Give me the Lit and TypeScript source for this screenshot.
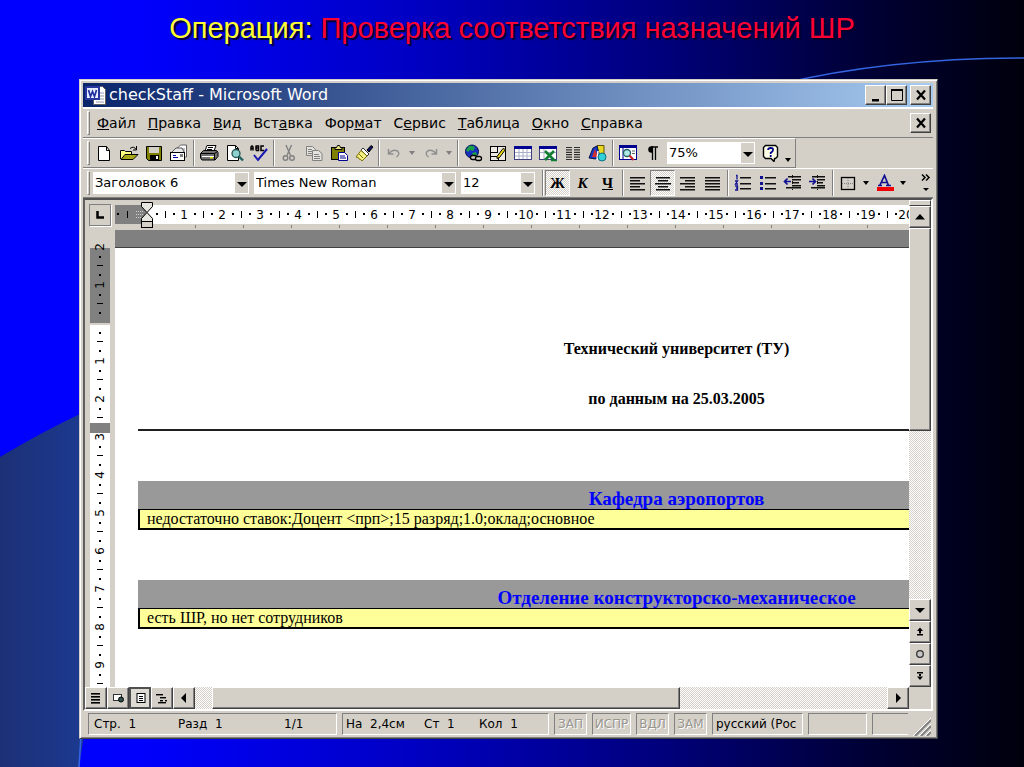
import { LitElement, html, css, svg, nothing } from "lit";
import { customElement, property } from "lit/decorators.js";
import { classMap } from "lit/directives/class-map.js";

const range = (a: number, b: number) => Array.from({ length: b - a + 1 }, (_, i) => a + i);

const lines = (rows: number[][], color = "#000", h = 1) =>
  rows.map(([x, y, w]) => svg`<rect x=${x} y=${y} width=${w} height=${h} fill=${color} />`);

const icons: Record<string, unknown> = {
  new: svg`<path d="M4.5 2.500h8l3 4v10h-11z" fill="#fff" stroke="#000"/><path d="M12.500 2.500v4h3" fill="none" stroke="#000"/>`,
  open: svg`<path d="M1.500 15V6.500h4l1 1h6v3" fill="#ffff80" stroke="#000"/><path d="M2 15.500l4-5h13l-5 5z" fill="#a8a818" stroke="#000"/><path d="M11 4.500q4-3 6 1M17.500 2v4h-3.500" fill="none" stroke="#000"/>`,
  save: svg`<path d="M2.500 2.500h15v14h-13l-2-2z" fill="#808000" stroke="#000"/><rect x="5" y="3" width="10" height="6" fill="#d4d0c8"/><rect x="6" y="11" width="9" height="5.500" fill="#000"/><rect x="12" y="12" width="2" height="3" fill="#fff"/>`,
  mail: svg`<path d="M8.500 9V4l3-3h6v12h-4" fill="#fff" stroke="#606060"/><path d="M11 5h5M11 7h5" stroke="#808080"/><path d="M3 8l4-4h6l2 4" fill="#e8e8e8" stroke="#555"/><rect x="1.500" y="8.500" width="14" height="8" fill="#fff" stroke="#000"/><path d="M4 13.500h5M4 11.500h3" stroke="#0000a0"/><rect x="11" y="10" width="3" height="3" fill="#808080"/>`,
  print: svg`<path d="M6 7l2-5.500h9L15 7" fill="#fff" stroke="#000"/><path d="M9 3.500h5M8 5.500h5" stroke="#000"/><path d="M1.500 9.500l3-3h13l1.500 2v4l-3 3.500h-13l-1.500-2z" fill="#707070" stroke="#000"/><path d="M2 9.500h13.500l3-2M15.500 9.500V16" fill="none" stroke="#000"/><path d="M3 12.500h12" stroke="#fff"/><rect x="11" y="13" width="3" height="1.500" fill="#e0e000"/>`,
  preview: svg`<path d="M3.500 1.500h8l3 3v12h-11z" fill="#fff" stroke="#000"/><path d="M11.500 1.500v3h3" fill="none" stroke="#000"/><circle cx="12" cy="9.500" r="4" fill="#8fd0d0" stroke="#205050" stroke-width="1.300"/><path d="M15 12.500l4 4" stroke="#206060" stroke-width="2.400"/>`,
  spell: svg`<path d="M2 6.500V3q1-2 2 0v3.500M2 4.500h2M7 1.500v5M7 2h2.500v2H7h2.500v2.500H7M15 2h-3v4.500h3" fill="none" stroke="#000" stroke-width="1.500"/><path d="M5 11l4 5 9-11" fill="none" stroke="#1818b0" stroke-width="2"/>`,
  cut: svg`<path d="M7 1l4.500 10.500M12.500 1L8 11.500" stroke="#808080" stroke-width="1.400" fill="none"/><circle cx="6.500" cy="14" r="2.300" fill="none" stroke="#808080" stroke-width="1.400"/><circle cx="13" cy="14" r="2.300" fill="none" stroke="#808080" stroke-width="1.400"/>`,
  copy: svg`<path d="M2.500 2.500h6l3 3v6h-9z" fill="#e4e2dc" stroke="#808080"/><path d="M4 5.500h4M4 7.500h5M4 9.500h4" stroke="#808080"/><path d="M8.500 6.500h6l3.500 3v7H8.500z" fill="#e4e2dc" stroke="#808080"/><path d="M10 10.500h5M10 12.500h6M10 14.500h6" stroke="#808080"/>`,
  paste: svg`<rect x="2.500" y="3.500" width="13" height="12" fill="#808000" stroke="#000"/><path d="M6 5.500V3.500h1.500l1-2h2l1 2H13v2z" fill="#e8e080" stroke="#000"/><path d="M9.500 8.500h6l3 3v5h-9z" fill="#fff" stroke="#000090"/><path d="M11 12h5M11 14h6" stroke="#000090"/>`,
  brush: svg`<path d="M13 6l4-4.500 2 1.500-4 5z" fill="#101060" stroke="#000"/><path d="M9 4l6 6-2 2-6-6z" fill="#fff" stroke="#303030"/><path d="M7 6.500l6 5.500-5 5q-1-2-3-2 0-2-3-2z" fill="#f4f080" stroke="#807000"/><path d="M5 10l4 4" stroke="#807000"/>`,
  undo: svg`<path d="M4.500 5v5h5M5 9.500q4-5 8.500-2.500 3 3-1 6" fill="none" stroke="#909090" stroke-width="1.500"/>`,
  redo: svg`<path d="M15.500 5v5h-5M15 9.500q-4-5-8.500-2.500-3 3 1 6" fill="none" stroke="#909090" stroke-width="1.500"/>`,
  globe: svg`<circle cx="9" cy="7.500" r="6.500" fill="#1830c0" stroke="#001050"/><path d="M6 2q5-1 6 2l-2 3-3-1-2 2-2-2zM9 9l4-1 1 3-3 2z" fill="#18a048"/><rect x="7.500" y="11.500" width="6" height="4" rx="2" fill="#d4d0c8" stroke="#000" stroke-width="1.300"/><rect x="12.500" y="12.500" width="6" height="4" rx="2" fill="#d4d0c8" stroke="#000" stroke-width="1.300"/>`,
  borders: svg`<rect x="2.500" y="2.500" width="15" height="14" fill="#ece9e2" stroke="#000"/><path d="M3 8.500h7M9.500 2v6M3 12.500h8M10.500 12v4" stroke="#000"/><path d="M9 12.500l6-8 2.500 1-6 8-2.500 1z" fill="#e8d820" stroke="#000"/>`,
  table: svg`<rect x="1.500" y="2.500" width="17" height="13" fill="#fff" stroke="#404080"/><rect x="1" y="2" width="18" height="3" fill="#000090"/><path d="M2 8.500h16M2 12h16M6 5v10M10 5v10M14 5v10" stroke="#a8b0c8"/>`,
  excel: svg`<rect x="1.500" y="2.500" width="17" height="13" fill="#fff" stroke="#404080"/><rect x="1" y="2" width="18" height="3" fill="#000090"/><path d="M2 8.500h16M6 5v10" stroke="#a8b0c8"/><path d="M7 7l9 9M16 7l-9 9" stroke="#108030" stroke-width="2.600"/><path d="M13 16.500h6" stroke="#108030" stroke-width="1.500"/>`,
  columns: svg`${range(0, 5).map((i) => svg`<path d=${`M3 ${3.5 + i * 2.4}h6M11 ${3.5 + i * 2.4}h6`} stroke="#303030" stroke-width="1.200"/>`)}`,
  draw: svg`<path d="M9 1.500h7v11H9z" fill="#e8d820" stroke="#605000"/><path d="M1 14L5 4l4-2 3 11-4 2z" fill="#1838c0" stroke="#001050"/><path d="M4 13L7 5l3 8z" fill="#d03030"/><path d="M10 7l-1 9" stroke="#fff" stroke-width="1.500"/><circle cx="14" cy="13" r="4" fill="#30d0d8" stroke="#107080"/>`,
  docmap: svg`<rect x="1.500" y="1.500" width="17" height="14" fill="#fff" stroke="#000090"/><rect x="1" y="1" width="18" height="3" fill="#000090"/><path d="M5 4v11" stroke="#000090"/><circle cx="9" cy="9" r="3.500" fill="#b0e8e8" stroke="#206060" stroke-width="1.300"/><path d="M11.500 11.500l4 4.500" stroke="#d02020" stroke-width="2"/><path d="M14 7h3M14 9.500h3" stroke="#606060"/>`,
  para: svg`<path d="M9.500 16V3.500M12.500 16V3.500M8 3h7" stroke="#000" stroke-width="1.300" fill="none"/><path d="M10 2.300H8.500a3 3 0 0 0 0 6.500H10z" fill="#000"/>`,
  help: svg`<path d="M5.500 1.500h10l2 2v9l-2 2h-1l-.5 3-3-3H5.500l-2-2v-9z" fill="#ffffe8" stroke="#000" stroke-width="1.400"/><path d="M8 6q0-2 2.700-2T13 6q0 1.500-2.300 2.800V10M10.700 11v2" fill="none" stroke="#000090" stroke-width="1.800"/>`,
  left: svg`${lines([[2, 3, 15], [2, 6, 10], [2, 9, 15], [2, 12, 10], [2, 15, 15]], "#111", 1.500)}`,
  center: svg`${lines([[3, 3, 14], [5, 6, 10], [2, 9, 16], [5, 12, 10], [3, 15, 14]], "#111", 1.500)}`,
  right: svg`${lines([[2, 3, 15], [7, 6, 10], [2, 9, 15], [7, 12, 10], [2, 15, 15]], "#111", 1.500)}`,
  justify: svg`${lines([[2, 3, 15], [2, 6, 15], [2, 9, 15], [2, 12, 15], [2, 15, 15]], "#111", 1.500)}`,
  numbered: svg`<path d="M3 1.500h1v4M2 7h2.500l-2 3h2.500M2 12h2.500v4H2M3 14h1.500" fill="none" stroke="#101090" stroke-width="1.300"/>${lines([[7, 3, 11], [7, 9, 11], [7, 14, 11]], "#111", 1.500)}`,
  bullets: svg`${lines([[2, 2, 3], [2, 8, 3], [2, 13, 3]], "#101090", 3)}${lines([[7, 3, 11], [7, 9, 11], [7, 14, 11]], "#111", 1.500)}`,
  outdent: svg`<path d="M2 7.500h6M4.500 4.500l-3 3 3 3" fill="none" stroke="#101090" stroke-width="1.700"/>${lines([[5, 2, 13], [9, 5, 9], [9, 8, 7], [9, 11, 9], [3, 13, 15]], "#111", 1.500)}<path d="M9.500 1v16" stroke="#111" stroke-dasharray="1 1"/>`,
  indent: svg`<path d="M1 7.500h6M4.500 4.500l3 3-3 3" fill="none" stroke="#101090" stroke-width="1.700"/>${lines([[4, 2, 13], [9, 5, 8], [9, 8, 6], [9, 11, 8], [3, 13, 14]], "#111", 1.500)}<path d="M9.500 1v16" stroke="#111" stroke-dasharray="1 1"/>`,
  frame: svg`<rect x="3.500" y="3.500" width="13" height="12" fill="none" stroke="#000" stroke-width="1.300"/><path d="M10 4v11M4 9.500h12" stroke="#808080" stroke-dasharray="1 1"/>`,
  color: svg`<path d="M3 11.500h4M11 11.500h5M5 11l4.500-9.500 4 10M6 8.500h6" fill="none" stroke="#101090" stroke-width="1.700"/><rect x="2" y="13" width="17" height="4" fill="#f00000"/>`,
  word: svg`<path d="M8.500 1.500h9l3 3v15h-12z" fill="#fff" stroke="#606060"/><path d="M13 8h6M13 11h6M13 14h6M11 17h8" stroke="#9098b0"/><rect x="1" y="2" width="13" height="12" fill="#e8ecff" stroke="#2838a0" stroke-width="2"/><path d="M3.500 5l2 6.500 2-5 2 5 2-6.500" fill="none" stroke="#2030a0" stroke-width="1.700"/>`,
  min: svg`<rect x="6" y="13" width="7" height="2.500" fill="#000"/>`,
  max: svg`<path d="M4.500 3.500h11v11h-11z" fill="none" stroke="#000"/><rect x="4" y="3" width="12" height="2" fill="#000"/>`,
  close: svg`<path d="M6 4.500l8 9M14 4.500l-8 9" stroke="#000" stroke-width="2.200"/>`,
  up: svg`<path d="M10 6l5 5.500H5z" fill="#000"/>`,
  down: svg`<path d="M10 12l5-5H5z" fill="#000"/>`,
  prev: svg`<path d="M8 4v10l5-5z" transform="rotate(180 10 9)" fill="#000"/>`,
  next: svg`<path d="M8 4v10l5-5z" fill="#000"/>`,
  pageUp: svg`<path d="M10 4.500l3 3.500H7zM9 8h2v2.500H9z" fill="#000"/><rect x="7" y="11" width="6" height="1.500" fill="#000"/>`,
  pageDown: svg`<path d="M10 13l3-3.500H7zM9 7h2v3H9z" fill="#000"/><rect x="7" y="5" width="6" height="1.500" fill="#000"/>`,
  browse: svg`<circle cx="10" cy="9" r="3.300" fill="#c8c8c8" stroke="#303030" stroke-width="1.300"/>`,
  viewNormal: svg`${lines([[5, 4, 9], [5, 7, 9], [5, 10, 9], [5, 13, 9]], "#000", 1.600)}`,
  viewWeb: svg`<rect x="5.500" y="5.500" width="8" height="6" fill="#fff" stroke="#303030"/><circle cx="13" cy="10.500" r="2.500" fill="#305050" stroke="#000"/>`,
  viewPage: svg`<rect x="6" y="4.500" width="8" height="9" fill="#fff" stroke="#000"/><path d="M8 7.500h4M8 9.500h4M8 11.500h4" stroke="#000"/>`,
  viewOutline: svg`${lines([[4, 5, 7], [8, 8, 6], [8, 11, 3], [13, 11, 2], [6, 13, 8]], "#000", 1.400)}`,
};

@customElement("w-icon")
export class WIcon extends LitElement {
  @property() name = "";
  static styles = css`
    :host { display: block; }
    svg { display: block; }
  `;
  render() {
    const big = this.name === "word";
    return html`<svg width=${big ? 22 : 20} height=${big ? 21 : 18} viewBox=${big ? "0 0 22 21" : "0 0 20 18"} aria-hidden="true">${icons[this.name]}</svg>`;
  }
}

@customElement("w-ruler")
export class WRuler extends LitElement {
  @property({ type: Boolean }) vertical = false;
  static styles = css`
    :host { display: block; overflow: hidden; }
    svg { display: block; }
    text { font: 12px "DejaVu Sans", sans-serif; text-anchor: middle; fill: #000; }
  `;
  render() {
    return this.vertical ? this.renderVertical() : this.renderHorizontal();
  }
  private renderHorizontal() {
    const zero = 31;
    const step = 38;
    return html`<svg width="2000" height="30" aria-hidden="true">
      <rect x="0" y="5" width="2000" height="19" fill="#fff" />
      <rect x="0" y="5" width=${zero} height="19" fill="#808080" />
      <path d="M21 11.500h8M21 14.500h8M21 17.500h8" stroke="#d0d0d0" stroke-dasharray="1 1" />
      <rect x="2" y="13" width="2" height="2" /><rect x="12" y="11" width="1" height="7" />
      ${range(0, 20).map((n) => svg`
        ${n ? svg`<text x=${zero + n * step} y="19">${n}</text>` : nothing}
        <rect x=${zero + n * step + 10} y="13" width="2" height="2" />
        <rect x=${zero + n * step + 19} y="11" width="1" height="7" />
        <rect x=${zero + n * step + 27} y="13" width="2" height="2" />
        <rect x=${80 + n * 48} y="25" width="1" height="3" fill="#808080" />`)}
      <path d="M26.500 2.500h11v4l-5.500 6-5.500-6zM32 12.500l5.500 6v3h-11v-3z" fill="#e8e6e0" stroke="#000" />
      <rect x="26.500" y="21.500" width="11" height="6" fill="#d4d0c8" stroke="#000" />
    </svg>`;
  }
  private renderVertical() {
    const zero = 93;
    const step = 38;
    return html`<svg width="20" height="2000" aria-hidden="true">
      <rect y="18" width="20" height="75" fill="#808080" />
      <rect y="95" width="20" height="2000" fill="#fff" />
      ${range(-2, 9).map((n) => svg`
        ${n ? svg`<text transform=${`translate(14 ${zero + n * step}) rotate(-90)`}>${Math.abs(n)}</text>` : nothing}
        <rect x="9" y=${zero + n * step + 9} width="2" height="2" />
        <rect x="7" y=${zero + n * step + 18} width="6" height="1" />
        <rect x="9" y=${zero + n * step + 27} width="2" height="2" />`)}
      <rect y="193" width="20" height="10" fill="#808080" />
    </svg>`;
  }
}

interface MenuItem { before: string; key: string; after: string; }
const menu: MenuItem[] = [
  { before: "", key: "Ф", after: "айл" },
  { before: "", key: "П", after: "равка" },
  { before: "", key: "В", after: "ид" },
  { before: "Вст", key: "а", after: "вка" },
  { before: "Фор", key: "м", after: "ат" },
  { before: "С", key: "е", after: "рвис" },
  { before: "", key: "Т", after: "аблица" },
  { before: "", key: "О", after: "кно" },
  { before: "", key: "С", after: "правка" },
];

@customElement("app-root")
export class AppRoot extends LitElement {
  static styles = css`
    :host { display: block; font-family: "DejaVu Sans", sans-serif; color: #000; }
    * { box-sizing: border-box; }
    button, select { font: inherit; color: inherit; margin: 0; padding: 0; border: 0; border-radius: 0; background: none; }
    .slide {
      position: relative; height: 100vh; min-height: 640px; overflow: hidden;
      display: flex; flex-direction: column;
      background: linear-gradient(90deg, #0000ff 0%, #0000fc 14%, #0000c4 40%, #00007a 65%, #000034 85%, #00000c 100%);
    }
    .backdrop { position: absolute; inset: 0; width: 100%; height: 100%; }
    .heading {
      position: relative; flex: none; height: 79px; margin: 0; padding-top: 12px; text-align: center;
      font: 29px/32px "Liberation Sans", sans-serif; color: #ff0033; text-shadow: 2px 2px 1px #00002a;
    }
    .lead { color: #ffff33; }
    .window {
      position: relative; flex: 1; min-height: 0; margin: 0 86px 28px 79px; padding: 3px 4px 2px 3px;
      display: flex; flex-direction: column; background: #d4d0c8;
      border: 1px solid; border-color: #d4d0c8 #404040 #404040 #d4d0c8;
      box-shadow: inset 1px 1px #fff, inset -1px -1px #808080;
    }
    .titlebar {
      flex: none; height: 25px; display: flex; align-items: center; padding: 0 2px;
      background: linear-gradient(90deg, #0a246a, #a6caf0); border-bottom: 1px solid #fff;
    }
    .caption { flex: 1; margin: 0; padding-left: 2px; font-size: 16px; line-height: 24px; font-weight: 400; color: #fff; }
    .btn3d {
      flex: none; display: grid; place-items: center; overflow: hidden; background: #d4d0c8;
      border: 1px solid; border-color: #fff #404040 #404040 #fff; box-shadow: inset -1px -1px #808080;
    }
    .cap { width: 21px; height: 20px; }
    .gap { margin-left: 3px; }
    .bar { flex: none; height: 30px; display: flex; align-items: center; padding-left: 4px; border-bottom: 1px solid #808080; border-top: 1px solid #fff; }
    .grip { flex: none; width: 3px; height: 24px; border: 1px solid; border-color: #fff #808080 #808080 #fff; margin-right: 1px; }
    .menu { display: flex; flex: 1; gap: 12px; padding-left: 6px; font-size: 14px; line-height: 20px; }
    .bar.menubar { padding-right: 2px; }
    .tools { flex: none; display: flex; align-items: center; height: 28px; }
    .toolbar { align-self: flex-start; padding-right: 1px; border-right: 1px solid #808080; }
    .tool { width: 25px; height: 26px; display: grid; place-items: center; }
    .pressed { border: 1px solid; border-color: #808080 #fff #fff #808080; background: repeating-conic-gradient(#fff 0 25%, #d4d0c8 0 50%) 0 0 / 2px 2px; }
    .drop { width: 12px; height: 26px; display: grid; place-items: center; }
    .low { align-items: end; }
    .sep { width: 2px; height: 26px; margin: 0 1px 0 2px; border-left: 1px solid #808080; border-right: 1px solid #fff; }
    .letter { font: bold 15px/20px "Liberation Serif", serif; }
    .italic { font-style: italic; }
    .under { text-decoration: underline; }
    .combo { display: grid; grid-template-columns: 1fr 14px; height: 22px; margin: 0 2px; background: #fff; }
    .combo select { grid-area: 1 / 1 / 2 / 3; appearance: none; padding: 0 16px 2px 2px; font-size: 13px; outline: 0; }
    .combo span { grid-area: 1 / 2; display: grid; place-items: center; padding-top: 4px; background: #d4d0c8; border: 1px solid #fff; border-left: 0; pointer-events: none; }
    .style { width: 156px; }
    .font { width: 202px; margin-left: 3px; }
    .size { width: 74px; margin: 0 5px 0 3px; }
    .zoom { width: 88px; }
    .more { margin-left: auto; width: 14px; height: 26px; display: grid; justify-items: center; align-content: space-around; }
    .client {
      flex: 1; min-height: 0; display: grid;
      grid-template-columns: 30px minmax(0, 1fr) 22px; grid-template-rows: 30px minmax(0, 1fr) 22px;
      border: 2px solid; border-color: #505050 #fff #fff #606060;
    }
    .corner { display: grid; place-items: center; }
    .tab { width: 22px; height: 22px; display: grid; place-items: center; border: 1px solid #808080; box-shadow: 1px 1px #fff; }
    .vruler { padding-left: 5px; height: 100%; min-height: 0; display: grid; grid-template-rows: minmax(0, 1fr); }
    .doc { background: #fff; overflow: hidden; border-top: 17px solid #808080; box-shadow: inset 0 1px #404040; }
    .paper { width: 1100px; padding: 92px 0 0 23px; font-family: "Liberation Serif", serif; }
    .org { margin: 0; font-size: 16px; line-height: 20px; font-weight: bold; text-align: center; }
    .date { margin: 30px 0 0; padding-bottom: 20px; border-bottom: 2px solid #202020; }
    .dept { margin: 50px 0; }
    .dept h3 { margin: 0; padding-top: 7px; height: 28px; background: #999; color: #0000ff; font-size: 19px; line-height: 22px; text-align: center; }
    .dept p { margin: 0; height: 21px; padding-left: 7px; font-size: 16px; line-height: 18px; background: #ffff99; border: solid #000; border-width: 1px 2px 2px 2px; }
    .vscroll { grid-row: 1 / 3; grid-column: 3; display: flex; flex-direction: column; }
    .split { height: 6px; border: 1px solid; border-color: #fff #404040 #404040 #fff; }
    .track { flex: 1; background: repeating-conic-gradient(#fff 0 25%, #d4d0c8 0 50%) 0 0 / 2px 2px; }
    .vthumb { height: 203px; }
    .sq { width: 22px; height: 22px; }
    .hscroll { grid-column: 1 / 3; display: flex; }
    .view { width: 22px; height: 22px; }
    .on { border: 2px solid #505050; box-shadow: none; background: #dedbd5; }
    .nub { width: 17px; flex: none; }
    .hthumb { width: 468px; height: 22px; }
    .status { flex: none; display: flex; gap: 5px; height: 25px; padding: 2px 0 0 5px; font-size: 12px; line-height: 20px; white-space: pre; }
    .panel { flex: none; height: 22px; padding-left: 3px; display: flex; overflow: hidden; border: 1px solid; border-color: #808080 #fff #fff #808080; }
    .panel span { flex: none; }
    .place { width: 249px; padding-left: 5px; }
    .place span { width: 84px; }
    .place .of { width: auto; padding-left: 22px; }
    .pos { width: 207px; }
    .pos span:nth-child(1) { width: 78px; }
    .pos span:nth-child(2) { width: 55px; }
    .mode { width: 33px; padding: 0; justify-content: center; color: #999690; text-shadow: 1px 1px #fff; }
    .wide { width: 39px; }
    .lang { width: 91px; }
    .blank { width: 59px; }
    .last { flex: 1; border-right: 0; }
    .size-grip { flex: none; width: 20px; display: flex; align-items: flex-end; }
  `;

  private tool(name: string, label: string, pressed = false) {
    return html`<button class=${classMap({ tool: true, pressed })} aria-label=${label}><w-icon name=${name}></w-icon></button>`;
  }

  private arrow(label: string, gray = false, low = false) {
    return html`<button class=${classMap({ drop: true, low })} aria-label=${label}>
      <svg width="6" height=${low ? 8 : 4} aria-hidden="true"><path d="M0 0h6L3 4z" fill=${gray ? "#808080" : "#000"} /></svg>
    </button>`;
  }

  private combo(kind: string, label: string, value: string) {
    return html`<label class="combo ${kind}">
      <select aria-label=${label}><option>${value}</option></select>
      <span><svg width="10" height="6" aria-hidden="true"><path d="M0 0h10L5 5z" /></svg></span>
    </label>`;
  }

  render() {
    const sep = html`<span class="sep"></span>`;
    const button = (cls: string, icon: string, label: string) =>
      html`<button class="btn3d ${cls}" aria-label=${label}><w-icon name=${icon}></w-icon></button>`;
    return html`
      <main class="slide">
        <svg class="backdrop" viewBox="0 0 1024 767" preserveAspectRatio="none" aria-hidden="true">
          <defs>
            <linearGradient id="disc"><stop offset="0" stop-color="#1c3076" /><stop offset="1" stop-color="#1c3a90" /></linearGradient>
          </defs>
          <path d="M0 457Q40 433 84 412V735L79 767H0z" fill="url(#disc)" />
          <path d="M81 735L79 767" stroke="#3366ee" stroke-width="1.500" />
          <path d="M780 84Q890 58 1024 58" fill="none" stroke="#3464e0" stroke-width="1.500" />
        </svg>
        <h1 class="heading"><span class="lead">Операция:</span> Проверка соответствия назначений ШР</h1>
        <section class="window">
          <header class="titlebar">
            <w-icon name="word"></w-icon>
            <h2 class="caption">checkStaff - Microsoft Word</h2>
            ${button("cap", "min", "Свернуть")}${button("cap", "max", "Развернуть")}${button("cap gap", "close", "Закрыть")}
          </header>
          <div class="bar menubar">
            <span class="grip"></span>
            <nav class="menu">${menu.map((m) => html`<button>${m.before}<u>${m.key}</u>${m.after}</button>`)}</nav>
            ${button("cap", "close", "Закрыть документ")}
          </div>
          <div class="bar toolbar">
            <span class="grip"></span>
            <div class="tools">
              ${this.tool("new", "Создать")}${this.tool("open", "Открыть")}${this.tool("save", "Сохранить")}${this.tool("mail", "Сообщение")}${sep}
              ${this.tool("print", "Печать")}${this.tool("preview", "Просмотр")}${this.tool("spell", "Правописание")}${sep}
              ${this.tool("cut", "Вырезать")}${this.tool("copy", "Копировать")}${this.tool("paste", "Вставить")}${this.tool("brush", "Формат по образцу")}${sep}
              ${this.tool("undo", "Отменить")}${this.arrow("Список отмены", true)}${this.tool("redo", "Вернуть")}${this.arrow("Список возврата", true)}${sep}
              ${this.tool("globe", "Гиперссылка")}${this.tool("borders", "Таблицы и границы")}${this.tool("table", "Таблица")}${this.tool("excel", "Лист Excel")}${this.tool("columns", "Колонки")}${this.tool("draw", "Рисование")}${sep}
              ${this.tool("docmap", "Схема документа")}${this.tool("para", "Знаки")}
              ${this.combo("zoom", "Масштаб", "75%")}
              ${this.tool("help", "Справка")}${this.arrow("Другие кнопки", false, true)}
            </div>
          </div>
          <div class="bar">
            <span class="grip"></span>
            <div class="tools">
              ${this.combo("style", "Стиль", "Заголовок 6")}${this.combo("font", "Шрифт", "Times New Roman")}${this.combo("size", "Размер", "12")}${sep}
              <button class="tool letter pressed">Ж</button><button class="tool letter italic">К</button><button class="tool letter under">Ч</button>${sep}
              ${this.tool("left", "По левому краю")}${this.tool("center", "По центру", true)}${this.tool("right", "По правому краю")}${this.tool("justify", "По ширине")}${sep}
              ${this.tool("numbered", "Нумерация")}${this.tool("bullets", "Маркеры")}${this.tool("outdent", "Уменьшить отступ")}${this.tool("indent", "Увеличить отступ")}${sep}
              ${this.tool("frame", "Границы")}${this.arrow("Виды границ")}${this.tool("color", "Цвет шрифта")}${this.arrow("Палитра")}
            </div>
            <button class="more" aria-label="Ещё">
              <svg width="10" height="7" aria-hidden="true"><path d="M1 .5l3 3-3 3M5 .5l3 3-3 3" fill="none" stroke="#000" stroke-width="1.500" /></svg>
              <svg width="6" height="4" aria-hidden="true"><path d="M0 0h6L3 3z" /></svg>
            </button>
          </div>
          <div class="client">
            <div class="corner"><button class="tab" aria-label="Табуляция"><svg width="8" height="8" aria-hidden="true"><path d="M1.500 0v6.500H8" fill="none" stroke="#000" stroke-width="2.500" /></svg></button></div>
            <w-ruler></w-ruler>
            <div class="vscroll">
              <span class="split"></span>
              ${button("sq", "up", "Вверх")}
              <span class="btn3d vthumb"></span><span class="track"></span>
              ${button("sq", "down", "Вниз")}${button("sq", "pageUp", "Предыдущая страница")}${button("sq", "browse", "Выбор объекта")}${button("sq", "pageDown", "Следующая страница")}
            </div>
            <div class="vruler"><w-ruler vertical></w-ruler></div>
            <article class="doc">
              <div class="paper">
                <p class="org">Технический университет (ТУ)</p>
                <p class="org date">по данным на 25.03.2005</p>
                <section class="dept"><h3>Кафедра аэропортов</h3><p>недостаточно ставок:Доцент &lt;прп&gt;;15 разряд;1.0;оклад;основное</p></section>
                <section class="dept"><h3>Отделение конструкторско-механическое</h3><p>есть ШР, но нет сотрудников</p></section>
              </div>
            </article>
            <div class="hscroll">
              ${button("view", "viewNormal", "Обычный")}${button("view", "viewWeb", "Веб-документ")}${button("view on", "viewPage", "Разметка страницы")}${button("view", "viewOutline", "Структура")}
              ${button("view", "prev", "Влево")}
              <span class="track nub"></span><span class="btn3d hthumb"></span><span class="track"></span>
              ${button("view", "next", "Вправо")}
            </div>
          </div>
          <footer class="status">
            <div class="panel place"><span>Стр.  1</span><span>Разд  1</span><span class="of">1/1</span></div>
            <div class="panel pos"><span>На  2,4см</span><span>Ст  1</span><span>Кол  1</span></div>
            <div class="panel mode">ЗАП</div><div class="panel mode wide">ИСПР</div><div class="panel mode">ВДЛ</div><div class="panel mode">ЗАМ</div>
            <div class="panel lang">русский (Рос</div><div class="panel blank"></div><div class="panel last"></div>
            <span class="size-grip"><svg width="18" height="18" aria-hidden="true"><path d="M2 18L18 2M8 18L18 8M14 18l4-4" stroke="#808080" stroke-width="2" /><path d="M0 18L18 0M6 18L18 6M12 18l6-6" stroke="#fff" /></svg></span>
          </footer>
        </section>
      </main>
    `;
  }
}
